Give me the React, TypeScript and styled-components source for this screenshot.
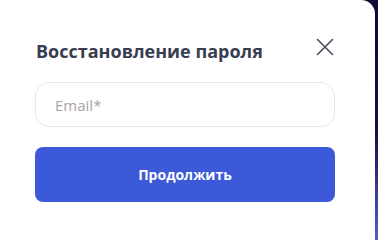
import styled, { createGlobalStyle } from 'styled-components';

const GlobalStyle = createGlobalStyle`
  html, body {
    margin: 0;
    padding: 0;
    height: 100%;
  }
  body {
    font-family: 'Open Sans', 'Noto Sans', sans-serif;
    background: linear-gradient(180deg, #0c0a33 0%, #140f45 55%, #3d3a9a 80%, #4f5fc4 100%);
    overflow: hidden;
  }
`;

const Page = styled.div`
  height: 100vh;
  display: flex;
  justify-content: flex-start;
  align-items: stretch;
`;

const Modal = styled.div`
  width: 375px;
  background: #ffffff;
  border-top-right-radius: 14px;
  padding: 34px 40px 0 35px;
  box-sizing: border-box;
  display: flex;
  flex-flow: column;
`;

const Header = styled.div`
  display: flex;
  justify-content: space-between;
  align-items: flex-start;
  padding-left: 1px;
  height: 30px;
`;

const Title = styled.h2`
  margin: 0;
  padding-top: 2px;
  font-size: 18px;
  line-height: 30px;
  font-weight: 700;
  color: #383d4f;
`;

const CloseButton = styled.button`
  width: 24px;
  height: 24px;
  border: none;
  background: none;
  padding: 0;
  margin-right: -2px;
  margin-top: 1px;
  cursor: pointer;
  display: flex;
  align-items: center;
  justify-content: center;
`;

const Input = styled.input`
  margin-top: 18px;
  width: 300px;
  height: 45px;
  box-sizing: border-box;
  border: 1px solid #e9e9ec;
  border-radius: 14px;
  padding: 0 19px;
  font-family: inherit;
  font-size: 15px;
  color: #383c4c;
  outline: none;

  &::placeholder {
    color: #aaa2ab;
  }
`;

const SubmitButton = styled.button`
  margin-top: 20px;
  width: 300px;
  height: 55px;
  border: none;
  border-radius: 8px;
  background: #3b59d9;
  color: #ffffff;
  font-family: inherit;
  font-size: 14px;
  font-weight: 700;
  cursor: pointer;
`;

export default function App() {
  return (
    <>
      <GlobalStyle />
      <Page>
        <Modal>
          <Header>
            <Title>Восстановление пароля</Title>
            <CloseButton aria-label="Закрыть">
              <svg width="18" height="18" viewBox="0 0 18 18" fill="none">
                <path d="M1.5 1.5L16.5 16.5M16.5 1.5L1.5 16.5" stroke="#4a4e5c" strokeWidth="1.6" strokeLinecap="round" />
              </svg>
            </CloseButton>
          </Header>
          <Input type="email" placeholder="Email*" />
          <SubmitButton>Продолжить</SubmitButton>
        </Modal>
      </Page>
    </>
  );
}
